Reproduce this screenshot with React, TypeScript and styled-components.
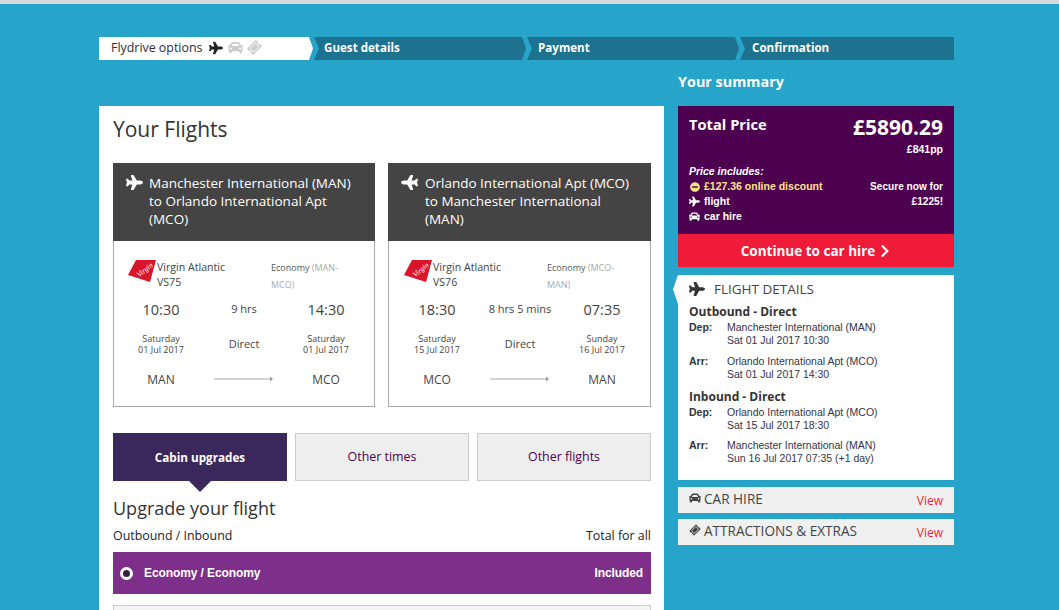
import React from "react";
import styled, { createGlobalStyle } from "styled-components";
import { FaPlane, FaCar, FaTicketAlt, FaChevronRight, FaMinusCircle } from "react-icons/fa";

const GlobalStyle = createGlobalStyle`
  html, body {
    margin: 0;
    padding: 0;
    height: 610px;
    overflow: hidden;
    background: #27a4c9;
    font-family: "Open Sans", sans-serif;
  }
`;

const TopLine = styled.div`
  height: 4px;
  background: #d9d9d9;
`;

const Page = styled.div`
  width: 855px;
  margin: 33px 0 0 99px;
`;

const Steps = styled.div`
  display: grid;
  grid-template-columns: 215px 213px 213px 214px;
  height: 23px;
`;

const stepShape = {
  first: "polygon(0 0, 210px 0, 214px 50%, 210px 100%, 0 100%)",
  middle:
    "polygon(0 0, calc(100% - 5px) 0, calc(100% - 1px) 50%, calc(100% - 5px) 100%, 0 100%, 5px 50%)",
  last: "polygon(0 0, 100% 0, 100% 100%, 0 100%, 5px 50%)",
};

const Step = styled.div<{ $shape: keyof typeof stepShape; $pad: number; $active?: boolean }>`
  display: flex;
  align-items: center;
  gap: 7px;
  box-sizing: border-box;
  padding: 0 0 2px ${(p) => p.$pad}px;
  background: ${(p) => (p.$active ? "#fff" : "#1c728f")};
  color: ${(p) => (p.$active ? "#2c2c3a" : "#fff")};
  font-size: ${(p) => (p.$active ? "12.4px" : "11.6px")};
  font-weight: ${(p) => (p.$active ? 400 : 700)};
  clip-path: ${(p) => stepShape[p.$shape]};
`;

const StepIcons = styled.span`
  display: flex;
  align-items: center;
  gap: 5px;
`;

const Ticket = styled(FaTicketAlt)`
  transform: rotate(-45deg);
`;

const SummaryTitle = styled.div`
  margin: 11px 0 0 579px;
  height: 35px;
  color: #fff;
  font-size: 14.4px;
  font-weight: 700;
  line-height: 21px;
`;

const Columns = styled.div`
  display: grid;
  grid-template-columns: 565px 276px;
  column-gap: 14px;
  align-items: start;
`;

const Main = styled.main`
  background: #fff;
  height: 504px;
  overflow: hidden;
  padding: 0 13px 0 14px;
  color: #333;
`;

const Heading = styled.h1`
  margin: 0;
  padding-top: 9px;
  height: 47px;
  font-size: 21px;
  font-weight: 400;
  line-height: 28px;
  color: #333;
  box-sizing: border-box;
`;

const Cards = styled.div`
  display: grid;
  grid-template-columns: 262px 263px;
  column-gap: 13px;
  margin-top: 10px;
`;

const Card = styled.section`
  --shift: 0px;
  border: 1px solid #aaa;
  border-top: 0;
  height: 243px;

  & + & {
    --shift: 1px;
  }
`;

const CardHead = styled.header`
  display: flex;
  gap: calc(6px + var(--shift));
  height: 78px;
  margin: 0 -1px;
  padding: 11px 12px 0 13px;
  box-sizing: border-box;
  background: #444;
  color: #fff;
  font-size: 13.5px;
  line-height: 18px;
`;

const HeadPlane = styled(FaPlane)<{ $flip?: boolean }>`
  flex: none;
  transform: ${(p) => (p.$flip ? "scaleX(-1)" : "none")};
`;

const Airline = styled.div`
  display: grid;
  grid-template-columns: 143px 1fr;
  height: 35px;
  padding: 18px 12px 0 calc(14px + var(--shift));
`;

const CarrierBlock = styled.div`
  display: flex;
  align-items: flex-start;
  font-size: 10.6px;
  line-height: 15px;
  color: #444;
`;

const CarrierText = styled.div`
  margin-top: 1px;
`;

const Logo = styled.svg`
  width: 29px;
  height: 23px;
  flex: none;
`;

const CabinText = styled.div`
  font-size: 9px;
  line-height: 17px;
  color: #555;
  width: 78px;
`;

const Muted = styled.span`
  color: #aaa;
`;

const Leg = styled.div`
  display: grid;
  grid-template-columns: 68px 98px 66px;
  padding-left: calc(13px + var(--shift));
  text-align: center;
  color: #444;
`;

const TimeRow = styled(Leg)`
  height: 32px;
  align-items: center;
`;

const Time = styled.div`
  font-size: 14.5px;
  font-weight: 500;
  line-height: 20px;
`;

const Duration = styled.div`
  font-size: 11px;
  line-height: 16px;
  margin-top: -3px;
`;

const Direct = styled.div`
  font-size: 11px;
  line-height: 16px;
`;

const DateRow = styled(Leg)`
  height: 36px;
  align-items: center;
`;

const DateText = styled.div`
  font-size: 9px;
  line-height: 11px;
`;

const AirportRow = styled(Leg)`
  height: 22px;
  margin-top: 6px;
  align-items: center;
  font-size: 12px;
`;

const Arrow = styled.svg`
  width: 59px;
  height: 6px;
  justify-self: center;
  margin-left: -1px;
`;

const Tabs = styled.div`
  display: grid;
  grid-template-columns: repeat(3, 174px);
  column-gap: 8px;
  margin-top: 26px;
`;

const Tab = styled.div<{ $active?: boolean }>`
  position: relative;
  display: flex;
  align-items: center;
  justify-content: center;
  height: 48px;
  box-sizing: border-box;
  padding-bottom: 1px;
  font-size: ${(p) => (p.$active ? "11.7px" : "12.4px")};
  font-weight: ${(p) => (p.$active ? 700 : 400)};
  color: ${(p) => (p.$active ? "#fff" : "#4e0050")};
  background: ${(p) => (p.$active ? "#3a285c" : "#eee")};
  border: ${(p) => (p.$active ? "0" : "1px solid #ccc")};

  &::after {
    content: "";
    display: ${(p) => (p.$active ? "block" : "none")};
    position: absolute;
    left: 76px;
    top: 48px;
    border: 11px solid transparent;
    border-top-color: #3a285c;
    border-bottom: 0;
  }
`;

const SubHeading = styled.h2`
  margin: 14px 0 0;
  font-size: 18px;
  font-weight: 400;
  line-height: 26px;
  color: #333;
`;

const ColumnLabels = styled.div`
  display: flex;
  justify-content: space-between;
  margin-top: 6px;
  font-size: 12.4px;
  line-height: 17px;
  color: #222;
`;

const Upgrade = styled.div`
  display: flex;
  align-items: center;
  justify-content: space-between;
  height: 42px;
  margin-top: 8px;
  padding: 0 8px 0 7px;
  background: #7e2f8a;
  color: #fff;
  font-family: "Liberation Sans", Arial, sans-serif;
  font-size: 12px;
  font-weight: 700;
  letter-spacing: -0.1px;
`;

const UpgradeLabel = styled.span`
  display: flex;
  align-items: center;
  gap: 11px;
`;

const Radio = styled.span`
  width: 7px;
  height: 7px;
  border: 3.5px solid #fff;
  border-radius: 50%;
  background: #36203f;
`;

const NextUpgrade = styled.div`
  height: 42px;
  margin-top: 11px;
  box-sizing: border-box;
  border: 1px solid #ccc;
  background: #f4f4f4;
`;

const Side = styled.aside`
  display: flex;
  flex-direction: column;
`;

const PriceBox = styled.div`
  height: 128px;
  box-sizing: border-box;
  padding: 9px 11px 0;
  background: #4e0050;
  color: #fff;
  font-family: "Liberation Sans", Arial, sans-serif;
  font-size: 10.5px;
  font-weight: 700;
`;

const PriceTop = styled.div`
  display: flex;
  justify-content: space-between;
  align-items: flex-start;
  height: 27px;
`;

const TotalLabel = styled.div`
  font-family: "Open Sans", sans-serif;
  font-size: 14.7px;
  line-height: 18px;
`;

const TotalValue = styled.div`
  font-family: "Open Sans", sans-serif;
  font-size: 21px;
  line-height: 24px;
`;

const PerPerson = styled.div`
  text-align: right;
  line-height: 14px;
  height: 22px;
`;

const Includes = styled.div`
  display: flex;
  justify-content: space-between;
  line-height: 15px;
`;

const IncludeLine = styled.div<{ $gold?: boolean }>`
  display: flex;
  align-items: center;
  gap: 4px;
  color: ${(p) => (p.$gold ? "#ffe58a" : "#fff")};
`;

const IncludeIcon = styled.span`
  display: flex;
  justify-content: center;
  width: 11px;
`;

const SecureNote = styled.div`
  text-align: right;
  margin-top: 15px;
  font-size: 10.1px;
`;

const Continue = styled.div`
  display: flex;
  align-items: center;
  justify-content: center;
  gap: 3px;
  height: 33px;
  padding-left: 1px;
  background: #ef1b38;
  color: #fff;
  font-size: 13.5px;
  font-weight: 700;
`;

const Details = styled.div`
  position: relative;
  height: 205px;
  margin-top: 8px;
  box-sizing: border-box;
  padding: 3px 11px 0;
  background: #fff;
  color: #333;

  &::before {
    content: "";
    position: absolute;
    left: -5px;
    top: 0;
    width: 5px;
    height: 29px;
    background: #fff;
    clip-path: polygon(100% 0, 0 50%, 100% 100%);
  }
`;

const DetailsHead = styled.div`
  display: flex;
  align-items: center;
  gap: 9px;
  height: 21px;
  font-size: 13.5px;
  color: #444;
`;

const Direction = styled.div`
  margin: 5px 0 1px;
  font-size: 12px;
  font-weight: 700;
  line-height: 16px;
`;

const Stop = styled.div<{ $gap?: number }>`
  display: grid;
  grid-template-columns: 38px 1fr;
  margin-bottom: ${(p) => p.$gap ?? 8}px;
  font-family: "Liberation Sans", Arial, sans-serif;
  font-size: 10.5px;
  line-height: 13px;
  color: #34344a;
`;

const StopLabel = styled.b`
  color: #333;
`;

const Extra = styled.div<{ $gap: number }>`
  display: flex;
  align-items: center;
  height: 26px;
  box-sizing: border-box;
  margin-top: ${(p) => p.$gap}px;
  padding: 0 11px 4px;
  background: #f0f0f0;
  color: #444;
  font-size: 13.6px;
`;

const ExtraIcon = styled.span`
  display: flex;
  justify-content: center;
  width: 12px;
  margin-right: 3px;
`;

const ViewLink = styled.span`
  margin: 4px 0 0 auto;
  color: #ef1b38;
  font-size: 12px;
`;

const VirginLogo = () => (
  <Logo viewBox="0 0 29 23">
    <polygon points="8,1 28,1 22,23 0,16" fill="#d9142b" />
    <text
      x="7"
      y="15"
      fontFamily="Liberation Serif, serif"
      fontStyle="italic"
      fontSize="7.5"
      fill="#fff"
      transform="rotate(-40 14 11)"
    >
      Virgin
    </text>
  </Logo>
);

const FlightArrow = () => (
  <Arrow viewBox="0 0 59 6">
    <path d="M0 3H56" stroke="#aaa" strokeWidth="1" />
    <path d="M56 0.5L59 3L56 5.5Z" fill="#999" />
  </Arrow>
);

type FlightCard = {
  route: string;
  flip?: boolean;
  flight: string;
  cabin: [string, string];
  depart: string;
  arrive: string;
  duration: string;
  departDay: string;
  departDate: string;
  arriveDay: string;
  arriveDate: string;
  from: string;
  to: string;
};

const flights: FlightCard[] = [
  {
    route: "Manchester International (MAN) to Orlando International Apt (MCO)",
    flight: "VS75",
    cabin: ["(MAN-", "MCO)"],
    depart: "10:30",
    arrive: "14:30",
    duration: "9 hrs",
    departDay: "Saturday",
    departDate: "01 Jul 2017",
    arriveDay: "Saturday",
    arriveDate: "01 Jul 2017",
    from: "MAN",
    to: "MCO",
  },
  {
    route: "Orlando International Apt (MCO) to Manchester International (MAN)",
    flip: true,
    flight: "VS76",
    cabin: ["(MCO-", "MAN)"],
    depart: "18:30",
    arrive: "07:35",
    duration: "8 hrs 5 mins",
    departDay: "Saturday",
    departDate: "15 Jul 2017",
    arriveDay: "Sunday",
    arriveDate: "16 Jul 2017",
    from: "MCO",
    to: "MAN",
  },
];

const App: React.FC = () => (
  <>
    <GlobalStyle />
    <TopLine />
    <Page>
      <Steps>
        <Step $shape="first" $pad={12} $active>
          Flydrive options
          <StepIcons>
            <FaPlane size={14} color="#222" />
            <FaCar size={15} color="#ccc" />
            <Ticket size={13} color="#ccc" />
          </StepIcons>
        </Step>
        <Step $shape="middle" $pad={10}>Guest details</Step>
        <Step $shape="middle" $pad={11}>Payment</Step>
        <Step $shape="last" $pad={12}>Confirmation</Step>
      </Steps>
      <SummaryTitle>Your summary</SummaryTitle>
      <Columns>
        <Main>
          <Heading>Your Flights</Heading>
          <Cards>
            {flights.map((f) => (
              <Card key={f.flight}>
                <CardHead>
                  <HeadPlane size={17} $flip={f.flip} />
                  <div>{f.route}</div>
                </CardHead>
                <Airline>
                  <CarrierBlock>
                    <VirginLogo />
                    <CarrierText>
                      Virgin Atlantic
                      <br />
                      {f.flight}
                    </CarrierText>
                  </CarrierBlock>
                  <CabinText>
                    Economy <Muted>{f.cabin[0]}</Muted>
                    <br />
                    <Muted>{f.cabin[1]}</Muted>
                  </CabinText>
                </Airline>
                <TimeRow>
                  <Time>{f.depart}</Time>
                  <Duration>{f.duration}</Duration>
                  <Time>{f.arrive}</Time>
                </TimeRow>
                <DateRow>
                  <DateText>
                    {f.departDay}
                    <br />
                    {f.departDate}
                  </DateText>
                  <Direct>Direct</Direct>
                  <DateText>
                    {f.arriveDay}
                    <br />
                    {f.arriveDate}
                  </DateText>
                </DateRow>
                <AirportRow>
                  <div>{f.from}</div>
                  <FlightArrow />
                  <div>{f.to}</div>
                </AirportRow>
              </Card>
            ))}
          </Cards>
          <Tabs>
            <Tab $active>Cabin upgrades</Tab>
            <Tab>Other times</Tab>
            <Tab>Other flights</Tab>
          </Tabs>
          <SubHeading>Upgrade your flight</SubHeading>
          <ColumnLabels>
            <span>Outbound / Inbound</span>
            <span>Total for all</span>
          </ColumnLabels>
          <Upgrade>
            <UpgradeLabel>
              <Radio />
              Economy / Economy
            </UpgradeLabel>
            <span>Included</span>
          </Upgrade>
          <NextUpgrade />
        </Main>
        <Side>
          <PriceBox>
            <PriceTop>
              <TotalLabel>Total Price</TotalLabel>
              <TotalValue>£5890.29</TotalValue>
            </PriceTop>
            <PerPerson>£841pp</PerPerson>
            <Includes>
              <div>
                <em>Price includes:</em>
                <IncludeLine $gold>
                  <IncludeIcon>
                    <FaMinusCircle size={10} />
                  </IncludeIcon>
                  £127.36 online discount
                </IncludeLine>
                <IncludeLine>
                  <IncludeIcon>
                    <FaPlane size={11} />
                  </IncludeIcon>
                  flight
                </IncludeLine>
                <IncludeLine>
                  <IncludeIcon>
                    <FaCar size={11} />
                  </IncludeIcon>
                  car hire
                </IncludeLine>
              </div>
              <SecureNote>
                Secure now for
                <br />
                £1225!
              </SecureNote>
            </Includes>
          </PriceBox>
          <Continue>
            Continue to car hire
            <FaChevronRight size={14} />
          </Continue>
          <Details>
            <DetailsHead>
              <FaPlane size={16} color="#333" />
              FLIGHT DETAILS
            </DetailsHead>
            <Direction>Outbound - Direct</Direction>
            <Stop>
              <StopLabel>Dep:</StopLabel>
              <div>
                Manchester International (MAN)
                <br />
                Sat 01 Jul 2017 10:30
              </div>
            </Stop>
            <Stop>
              <StopLabel>Arr:</StopLabel>
              <div>
                Orlando International Apt (MCO)
                <br />
                Sat 01 Jul 2017 14:30
              </div>
            </Stop>
            <Direction>Inbound - Direct</Direction>
            <Stop $gap={7}>
              <StopLabel>Dep:</StopLabel>
              <div>
                Orlando International Apt (MCO)
                <br />
                Sat 15 Jul 2017 18:30
              </div>
            </Stop>
            <Stop>
              <StopLabel>Arr:</StopLabel>
              <div>
                Manchester International (MAN)
                <br />
                Sun 16 Jul 2017 07:35 (+1 day)
              </div>
            </Stop>
          </Details>
          <Extra $gap={7}>
            <ExtraIcon>
              <FaCar size={12} />
            </ExtraIcon>
            CAR HIRE
            <ViewLink>View</ViewLink>
          </Extra>
          <Extra $gap={6}>
            <ExtraIcon>
              <Ticket size={10} />
            </ExtraIcon>
            ATTRACTIONS &amp; EXTRAS
            <ViewLink>View</ViewLink>
          </Extra>
        </Side>
      </Columns>
    </Page>
  </>
);

export default App;
